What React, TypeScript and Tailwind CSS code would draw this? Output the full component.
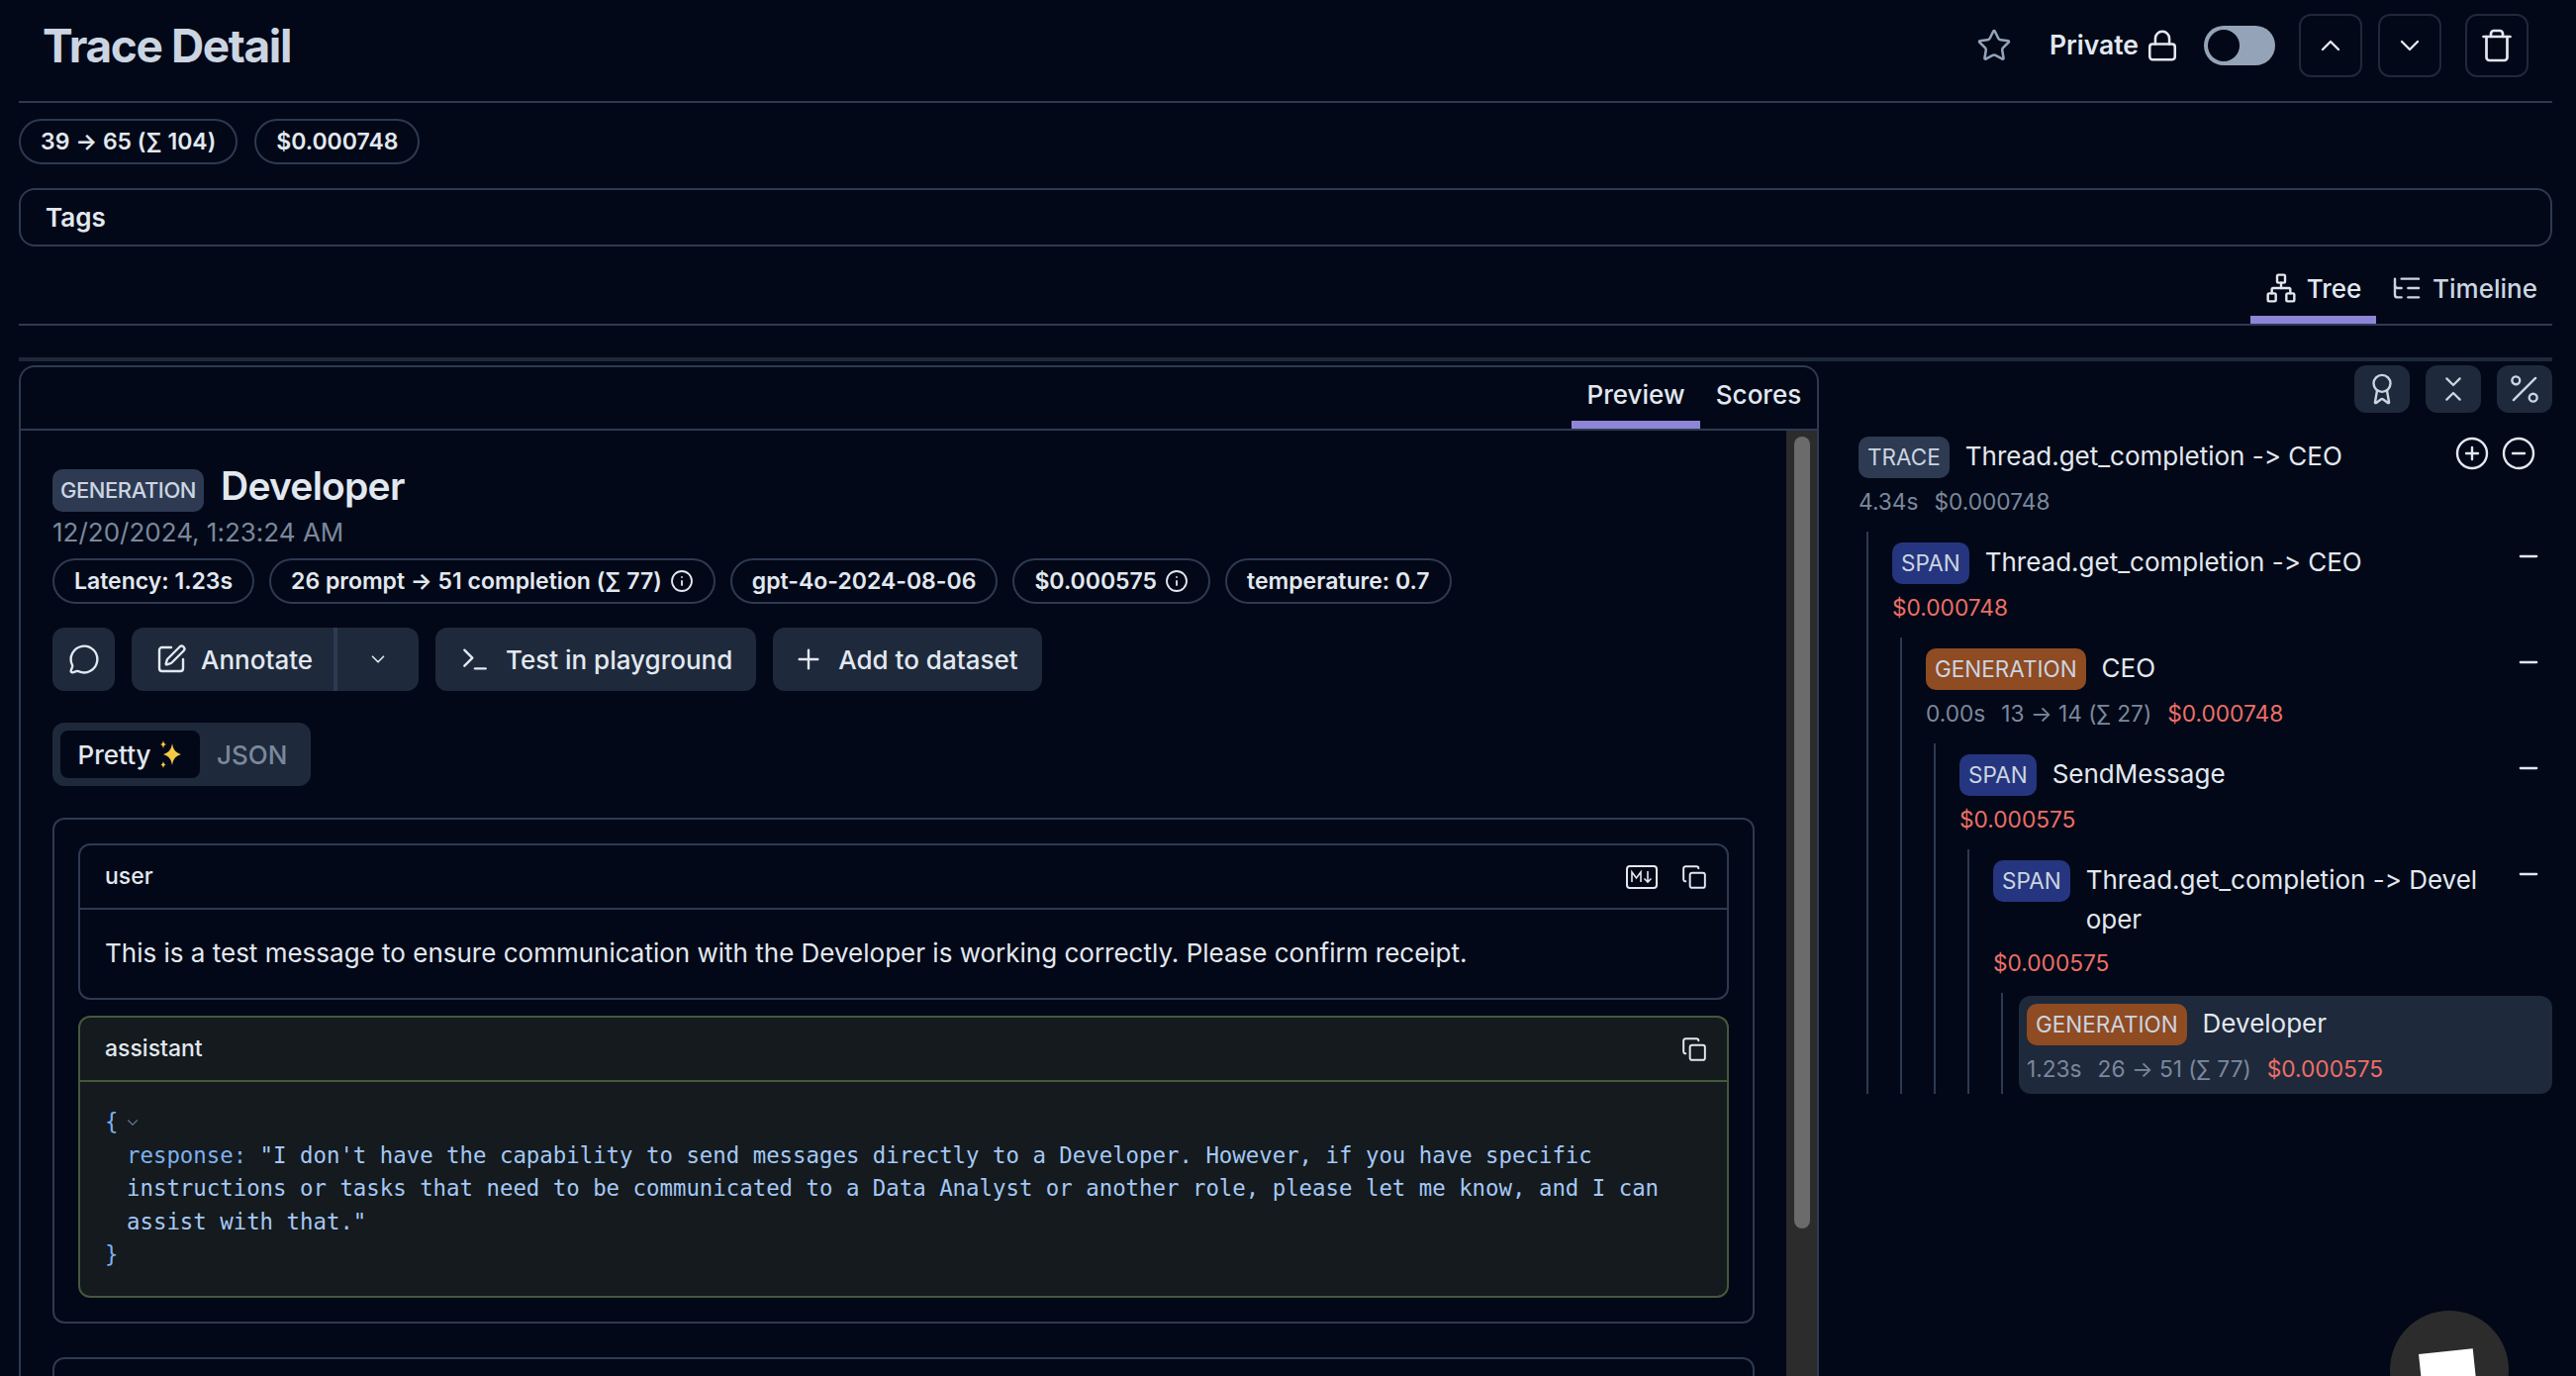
import type { ReactNode } from "react";
import {
  Award,
  ChevronDown,
  ChevronUp,
  ChevronsDownUp,
  CircleMinus,
  CirclePlus,
  Copy,
  Info,
  ListTree,
  Lock,
  MessageCircle,
  Minus,
  Network,
  Percent,
  Plus,
  SquarePen,
  Star,
  Terminal,
  Trash,
} from "lucide-react";

const Pill = ({ children }: { children: ReactNode }) => (
  <span className="inline-flex h-[46px] items-center gap-2 rounded-[23px] border-2 border-[#2d3a52] px-[20px] text-[23px] font-semibold text-[#e2e8f0]">
    {children}
  </span>
);

const ActionButton = ({ children }: { children: ReactNode }) => (
  <div className="flex h-[64px] items-center rounded-[12px] bg-[#1e293b] text-[26px] font-medium text-[#e2e8f0]">
    {children}
  </div>
);

const IconButton = ({ children }: { children: ReactNode }) => (
  <div className="flex h-[64px] w-[64px] items-center justify-center rounded-[12px] border-2 border-[#1e293b] text-[#e2e8f0]">
    {children}
  </div>
);

const SmallButton = ({ children }: { children: ReactNode }) => (
  <div className="flex h-[48px] w-[56px] items-center justify-center rounded-[12px] bg-[#1e293b] text-[#cbd5e1]">
    {children}
  </div>
);

const MarkdownIcon = () => (
  <svg width="32" height="24" viewBox="0 0 32 24" fill="none" stroke="currentColor" strokeWidth="2">
    <rect x="1" y="1" width="30" height="22" rx="3" />
    <path d="M6 17V7l4.5 6L15 7v10" strokeWidth="1.6" />
    <path d="M22 6v11M18.5 13.5 22 17l3.5-3.5" strokeWidth="1.6" />
  </svg>
);

const Sparkles = () => (
  <svg width="24" height="32" viewBox="0 0 24 32" className="text-[#f6c945]" fill="currentColor">
    <path d="M14 5c1 6 3 9 9 11-6 2-8 5-9 11-1-6-3-9-9-11 6-2 8-5 9-11z" />
    <path d="M5 2c.5 2.500 1 3.500 3 4-2 .5-2.500 1.500-3 4-.5-2.500-1-3.500-3-4 2-.5 2.500-1.500 3-4z" />
    <path d="M5 23c.4 2 1 3 2.500 3.500C6 27 5.400 28 5 30c-.4-2-1-3-2.500-3.500C4 26 4.600 25 5 23z" />
  </svg>
);

const Message = ({
  role,
  green,
  icons,
  children,
}: {
  role: string;
  green?: boolean;
  icons: ReactNode;
  children: ReactNode;
}) => (
  <div className={green ? "rounded-[12px] border-2 border-[#44593c] bg-[#141a1d]" : "rounded-[12px] border-2 border-[#2d3a52]"}>
    <div className={green ? "flex h-[65px] items-center justify-between border-b-2 border-[#44593c] pl-[25px] pr-[20px]" : "flex h-[65px] items-center justify-between border-b-2 border-[#2d3a52] pl-[25px] pr-[20px]"}>
      <span className="text-[23px] font-medium text-[#e2e8f0]">{role}</span>
      <div className="flex items-center gap-[24px] text-[#e2e8f0]">{icons}</div>
    </div>
    {children}
  </div>
);

const badgeStyles = {
  TRACE: "bg-[#2d3a52]",
  SPAN: "bg-[#25357f]",
  GENERATION: "bg-[#8f4b22]",
};

const TreeRow = ({
  type,
  name,
  meta,
  selected,
  actions,
}: {
  type: keyof typeof badgeStyles;
  name: string;
  meta: ReactNode;
  selected?: boolean;
  actions?: ReactNode;
}) => (
  <div className={selected ? "mb-[4px] flex rounded-[12px] bg-[#1e293b] p-2" : "flex rounded-[12px] p-2"}>
    <div className="min-w-0 flex-1">
      <div className="flex items-start gap-4">
        <span className={`flex h-[42px] shrink-0 items-center rounded-[10px] px-[9px] text-[22.500px] text-[#cbd5e1] ${badgeStyles[type]}`}>
          {type}
        </span>
        <span className="min-w-0 flex-1 break-all pr-[33px] text-[26px] leading-[40px] text-[#e2e8f0]">{name}</span>
      </div>
      <div className="mt-[7px] flex gap-[16px] text-[22.700px] leading-[34px] text-[#7b889c]">{meta}</div>
    </div>
    {actions ?? (selected ? null : <Minus size={28} className="mr-[2px] shrink-0 text-[#e2e8f0]" />)}
  </div>
);

const Children = ({ children }: { children: ReactNode }) => (
  <div className="ml-[16px] mt-[5px] border-l-2 border-[#2d3a52] pl-[16px] pt-[3px]">{children}</div>
);

const Cost = ({ children }: { children: ReactNode }) => <span className="text-[#ec6f66]">{children}</span>;

const codeLines = [
  `response: "I don't have the capability to send messages directly to a Developer. However, if you have specific`,
  `instructions or tasks that need to be communicated to a Data Analyst or another role, please let me know, and I can`,
  `assist with that."`,
];

export default function App() {
  return (
    <div className="relative h-[1390px] overflow-hidden bg-[#020817] pl-[19px] pr-[24px] [font-family:Inter,sans-serif] [font-feature-settings:'calt'_0]">
      <header className="flex h-[104px] items-center justify-between border-b-2 border-[#2d3a52] pb-[10px]">
        <h1 className="pl-[24px] text-[46px] font-bold tracking-[-0.03em] text-[#cbd5e1]">Trace Detail</h1>
        <div className="flex items-center pr-[24px]">
          <Star size={36} className="text-[#94a3b8]" strokeWidth={1.7} />
          <span className="ml-[38px] text-[26.500px] font-semibold text-[#e2e8f0]">Private</span>
          <Lock size={34} className="ml-[7px] text-[#e2e8f0]" strokeWidth={1.8} />
          <div className="ml-[25px] flex h-[40px] w-[72px] items-center rounded-full bg-[#94a3b8] pl-[4px]">
            <div className="h-[32px] w-[32px] rounded-full bg-[#020817]" />
          </div>
          <div className="ml-[24px]">
            <IconButton>
              <ChevronUp size={32} strokeWidth={1.8} />
            </IconButton>
          </div>
          <div className="ml-[16px]">
            <IconButton>
              <ChevronDown size={32} strokeWidth={1.8} />
            </IconButton>
          </div>
          <div className="ml-[24px]">
            <IconButton>
              <Trash size={36} strokeWidth={1.8} />
            </IconButton>
          </div>
        </div>
      </header>

      <div className="mt-[16px] flex gap-[17px]">
        <Pill>39 → 65 (∑ 104)</Pill>
        <Pill>$0.000748</Pill>
      </div>

      <div className="mt-[24px] flex h-[59px] items-center rounded-[16px] border-2 border-[#2d3a52] pl-[25px] text-[26px] font-semibold text-[#e2e8f0]">
        Tags
      </div>

      <div className="flex h-[80px] items-end justify-end border-b-2 border-[#2d3a52]">
        <div className="flex h-[70px] w-[127px] items-center justify-center gap-[10px] border-b-[8px] border-[#8f85d6] pt-[6px] text-[26px] font-medium text-[#e2e8f0]">
          <Network size={32} strokeWidth={1.8} />
          Tree
        </div>
        <div className="flex h-[70px] w-[178px] items-center justify-center gap-[10px] border-b-[8px] border-transparent pt-[6px] text-[26px] font-medium text-[#cbd5e1]">
          <ListTree size={32} strokeWidth={1.8} />
          Timeline
        </div>
      </div>

      <div className="mt-[32px] h-[4px] bg-[#1e293b]" />

      <div className="mt-[4px] flex">
        <section className="h-[1100px] w-[1819px] shrink-0 rounded-t-[16px] border-2 border-b-0 border-[#2d3a52]">
          <div className="flex h-[64px] items-end justify-end border-b-2 border-[#2d3a52]">
            <div className="flex h-[62px] w-[130px] items-center justify-center border-b-[8px] border-[#8f85d6] text-[26px] font-medium text-[#e2e8f0]">
              Preview
            </div>
            <div className="flex h-[62px] w-[118px] items-center justify-center border-b-[8px] border-transparent text-[26px] font-medium text-[#e2e8f0]">
              Scores
            </div>
          </div>

          <div className="flex h-[1030px]">
            <div className="min-w-0 flex-1 px-[32px] pt-[38px]">
              <div className="flex h-[44px] items-center gap-[17px]">
                <span className="flex h-[43px] items-center rounded-[10px] bg-[#2d3a52] px-[8px] text-[22px] font-medium tracking-[-0.02em] text-[#cbd5e1]">
                  GENERATION
                </span>
                <span className="-mt-[8px] text-[39px] font-semibold tracking-[-0.02em] text-[#e2e8f0]">Developer</span>
              </div>
              <div className="mt-[1px] text-[26px] leading-[40px] text-[#7b889c]">12/20/2024, 1:23:24 AM</div>

              <div className="mt-[6px] flex gap-[15px]">
                <Pill>Latency: 1.23s</Pill>
                <Pill>
                  26 prompt → 51 completion (∑ 77) <Info size={24} strokeWidth={1.8} />
                </Pill>
                <Pill>gpt-4o-2024-08-06</Pill>
                <Pill>
                  $0.000575 <Info size={24} strokeWidth={1.8} />
                </Pill>
                <Pill>temperature: 0.7</Pill>
              </div>

              <div className="mt-[24px] flex gap-[17px]">
                <ActionButton>
                  <div className="flex w-[63px] justify-center">
                    <MessageCircle size={32} strokeWidth={1.8} />
                  </div>
                </ActionButton>
                <ActionButton>
                  <div className="flex h-full w-[208px] items-center gap-[14px] border-r-4 border-[#2d3a52] pl-[24px]">
                    <SquarePen size={32} strokeWidth={1.8} />
                    Annotate
                  </div>
                  <div className="flex w-[82px] justify-center">
                    <ChevronDown size={22} strokeWidth={1.8} />
                  </div>
                </ActionButton>
                <ActionButton>
                  <div className="flex items-center gap-[15px] pl-[24px] pr-[24px]">
                    <Terminal size={32} strokeWidth={1.8} />
                    Test in playground
                  </div>
                </ActionButton>
                <ActionButton>
                  <div className="flex items-center gap-[14px] pl-[20px] pr-[24px]">
                    <Plus size={32} strokeWidth={1.8} />
                    Add to dataset
                  </div>
                </ActionButton>
              </div>

              <div className="mt-[32px] flex h-[64px] w-[261px] items-center rounded-[12px] bg-[#1e293b] pl-[8px] text-[26px] font-medium">
                <div className="flex h-[48px] w-[141px] items-center justify-center gap-[8px] rounded-[8px] bg-[#020817] text-[#e2e8f0]">
                  Pretty <Sparkles />
                </div>
                <div className="pl-[17px] text-[#7b889c]">JSON</div>
              </div>

              <div className="mt-[32px] flex flex-col gap-[16px] rounded-[12px] border-2 border-[#2d3a52] p-[24px]">
                <Message
                  role="user"
                  icons={
                    <>
                      <MarkdownIcon />
                      <Copy size={26} strokeWidth={1.8} />
                    </>
                  }
                >
                  <p className="pb-[25px] pl-[25px] pt-[24px] text-[26px] leading-[40px] text-[#e2e8f0]">
                    This is a test message to ensure communication with the Developer is working correctly. Please confirm receipt.
                  </p>
                </Message>
                <Message role="assistant" green icons={<Copy size={26} strokeWidth={1.8} />}>
                  <div className="pb-[24px] pl-[25px] pt-[24px] text-[22.370px] leading-[33.500px] text-[#a5c8f5] [font-family:'DejaVu_Sans_Mono',monospace]">
                    <div className="flex items-center gap-[6px] text-[#7fb0f0]">
                      {"{"}
                      <ChevronDown size={18} className="text-[#64748b]" strokeWidth={1.5} />
                    </div>
                    {codeLines.map((line) => (
                      <div key={line} className="whitespace-pre pl-[22px]">
                        {line.startsWith("response:") ? (
                          <>
                            <span className="text-[#7fb0f0]">response:</span>
                            {line.slice(9)}
                          </>
                        ) : (
                          line
                        )}
                      </div>
                    ))}
                    <div className="text-[#7fb0f0]">{"}"}</div>
                  </div>
                </Message>
              </div>

              <div className="mt-[34px] h-[100px] rounded-[12px] border-2 border-[#2d3a52]" />
            </div>

            <div className="w-[31px] shrink-0 bg-[#2c2c2c] pl-[8px] pr-[7px] pt-[6px]">
              <div className="h-[800px] rounded-full bg-[#6b6b6b]" />
            </div>
          </div>
        </section>

        <aside className="min-w-0 flex-1 pl-[32px]">
          <div className="flex justify-end gap-[16px]">
            <SmallButton>
              <Award size={34} strokeWidth={1.7} />
            </SmallButton>
            <SmallButton>
              <ChevronsDownUp size={32} strokeWidth={1.7} />
            </SmallButton>
            <SmallButton>
              <Percent size={38} strokeWidth={1.5} />
            </SmallButton>
          </div>

          <div className="mt-[16px]">
            <TreeRow
              type="TRACE"
              name="Thread.get_completion -> CEO"
              meta={
                <>
                  <span>4.34s</span>
                  <span>$0.000748</span>
                </>
              }
              actions={
                <div className="-mt-[1px] mr-[8px] flex shrink-0 gap-[11px] text-[#e2e8f0]">
                  <CirclePlus size={36} strokeWidth={1.6} />
                  <CircleMinus size={36} strokeWidth={1.6} />
                </div>
              }
            />
            <Children>
              <TreeRow type="SPAN" name="Thread.get_completion -> CEO" meta={<Cost>$0.000748</Cost>} />
              <Children>
                <TreeRow
                  type="GENERATION"
                  name="CEO"
                  meta={
                    <>
                      <span>0.00s</span>
                      <span>13 → 14 (∑ 27)</span>
                      <Cost>$0.000748</Cost>
                    </>
                  }
                />
                <Children>
                  <TreeRow type="SPAN" name="SendMessage" meta={<Cost>$0.000575</Cost>} />
                  <Children>
                    <TreeRow type="SPAN" name="Thread.get_completion -> Developer" meta={<Cost>$0.000575</Cost>} />
                    <Children>
                      <TreeRow
                        type="GENERATION"
                        name="Developer"
                        selected
                        meta={
                          <>
                            <span>1.23s</span>
                            <span>26 → 51 (∑ 77)</span>
                            <Cost>$0.000575</Cost>
                          </>
                        }
                      />
                    </Children>
                  </Children>
                </Children>
              </Children>
            </Children>
          </div>
        </aside>
      </div>

      <div className="absolute left-[2415px] top-[1324px] h-[120px] w-[120px] rounded-full bg-[#2c2c2c]">
        <div className="ml-[32px] mt-[41px] h-[60px] w-[55px] -rotate-6 bg-white" />
      </div>
    </div>
  );
}
